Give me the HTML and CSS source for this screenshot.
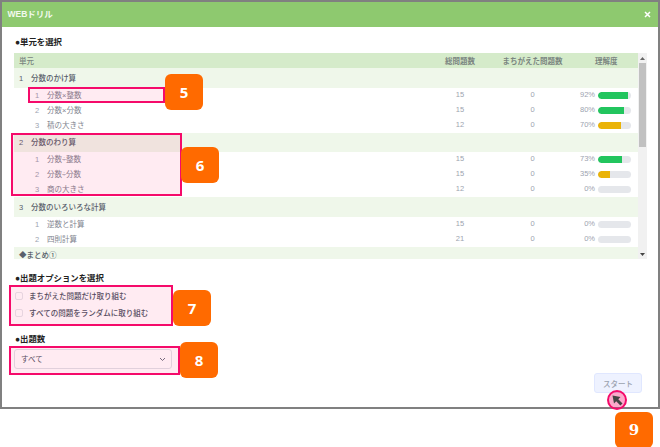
FILE: index.html
```html
<!DOCTYPE html>
<html lang="ja">
<head>
<meta charset="utf-8">
<title>WEBドリル</title>
<link rel="stylesheet" href="styles.css">
</head>
<body>
<div class="stage">
  <section class="modal">
    <header class="modal-head">
      <span class="modal-title">WEBドリル</span>
      <svg class="close" width="7" height="7" viewBox="0 0 7 7"><path d="M1 1l5 5M6 1L1 6" stroke="#fff" stroke-width="1.5" fill="none"/></svg>
    </header>
    <div class="modal-body">
      <h2 class="label first">●単元を選択</h2>
      <div class="table-wrap">
        <div class="table">
          <div class="row head"><span class="name">単元</span><span class="num">総問題数</span><span class="num">まちがえた問題数</span><span class="num">理解度</span></div>

          <div class="row group"><span class="name"><i class="gno">1</i>分数のかけ算</span></div>
          <div class="row item"><span class="name"><i class="ino">1</i>分数×整数</span><span class="num">15</span><span class="num">0</span><span class="rate"><b>92%</b><span class="bar"><span class="fill green" style="width:92%"></span></span></span></div>
          <div class="row item"><span class="name"><i class="ino">2</i>分数×分数</span><span class="num">15</span><span class="num">0</span><span class="rate"><b>80%</b><span class="bar"><span class="fill green" style="width:80%"></span></span></span></div>
          <div class="row item"><span class="name"><i class="ino">3</i>積の大きさ</span><span class="num">12</span><span class="num">0</span><span class="rate"><b>70%</b><span class="bar"><span class="fill amber" style="width:70%"></span></span></span></div>

          <div class="row group"><span class="name"><i class="gno">2</i>分数のわり算</span></div>
          <div class="row item"><span class="name"><i class="ino">1</i>分数÷整数</span><span class="num">15</span><span class="num">0</span><span class="rate"><b>73%</b><span class="bar"><span class="fill green" style="width:73%"></span></span></span></div>
          <div class="row item"><span class="name"><i class="ino">2</i>分数÷分数</span><span class="num">15</span><span class="num">0</span><span class="rate"><b>35%</b><span class="bar"><span class="fill amber" style="width:35%"></span></span></span></div>
          <div class="row item"><span class="name"><i class="ino">3</i>商の大きさ</span><span class="num">12</span><span class="num">0</span><span class="rate"><b>0%</b><span class="bar"></span></span></div>

          <div class="row group"><span class="name"><i class="gno">3</i>分数のいろいろな計算</span></div>
          <div class="row item"><span class="name"><i class="ino">1</i>逆数と計算</span><span class="num">15</span><span class="num">0</span><span class="rate"><b>0%</b><span class="bar"></span></span></div>
          <div class="row item"><span class="name"><i class="ino">2</i>四則計算</span><span class="num">21</span><span class="num">0</span><span class="rate"><b>0%</b><span class="bar"></span></span></div>

          <div class="row group last"><span class="name">◆まとめ①</span></div>
        </div>
        <div class="scrollbar">
          <svg width="5" height="3" viewBox="0 0 5 3"><path d="M2.5 0L5 3H0z" fill="#666"/></svg>
          <span class="thumb"></span>
          <svg width="5" height="3" viewBox="0 0 5 3"><path d="M0 0h5L2.500 3z" fill="#444"/></svg>
        </div>
      </div>

      <h2 class="label options">●出題オプションを選択</h2>
      <label class="check"><span class="box"></span>まちがえた問題だけ取り組む</label>
      <label class="check"><span class="box"></span>すべての問題をランダムに取り組む</label>

      <h2 class="label count">●出題数</h2>
      <div class="select"><span class="select-value">すべて</span>
        <svg width="7" height="5" viewBox="0 0 7 5"><path d="M1 1l2.500 2.500L6 1" stroke="#6b7280" stroke-width="1" fill="none"/></svg>
      </div>

      <div class="foot"><button class="start">スタート</button></div>
    </div>
  </section>

  <div class="mark m5"></div>
  <div class="mark m6"></div>
  <div class="mark m7"></div>
  <div class="mark m8"></div>
  <div class="tag t5">5</div>
  <div class="tag t6">6</div>
  <div class="tag t7">7</div>
  <div class="tag t8">8</div>
  <div class="tag t9">9</div>
  <div class="pointer">
    <svg width="14" height="14" viewBox="0 0 14 14"><path d="M2.500 2.500L10.500 4 8.300 6.200 12.500 10.400 10.400 12.500 6.200 8.300 4 10.500z" fill="#444"/></svg>
  </div>
</div>
</body>
</html>
```
FILE: styles.css
```css
* { box-sizing: border-box; }
html, body { margin: 0; padding: 0; background: #fff; }
body {
  width: 660px;
  height: 447px;
  overflow: hidden;
  font-family: "Liberation Sans", "Noto Sans CJK JP", sans-serif;
  color: #6b7280;
}
.stage { position: relative; width: 660px; height: 447px; }
.modal {
  height: 408.500px;
  border: 2px solid #808080;
  background: #fff;
  display: flex;
  flex-direction: column;
}
.modal-head {
  height: 25px;
  flex: none;
  background: #8ec96f;
  display: flex;
  align-items: center;
  justify-content: space-between;
  padding: 0 7.500px 0 5.500px;
  color: #fff;
}
.modal-title { font-size: 8.500px; font-weight: 700; color: #f2f9ee; margin-bottom: 3px; }
.close { margin-bottom: 1px; }
.modal-body { flex: 1; padding: 0 10px 0 12px; display: flex; flex-direction: column; }
.label {
  margin: 0;
  font-size: 8.400px;
  line-height: 12px;
  font-weight: 700;
  color: #222;
}
.label.first { margin: 9px 0 5px 1px; }
.label.options { margin: 13px 0 3.500px 1px; }
.label.count { margin: 11px 0 4.800px 1px; }

.table-wrap { display: flex; height: 206px; overflow: hidden; }
.table { width: 623.500px; flex: none; overflow: hidden; }
.row {
  display: grid;
  grid-template-columns: 416px 60px 85px 62.500px;
  align-items: center;
  font-size: 7.500px;
}
.row.head { height: 15px; padding-bottom: 1px; background: #d5ebca; font-weight: 700; color: #7a8580; }
.row.head .name { padding-left: 5px; font-weight: 500; }
.row.group { height: 19.500px; padding-bottom: 1px; background: #eff7ea; color: #59606b; font-weight: 500; }
.row.group .name { padding-left: 5px; }
.row.item { height: 15px; color: #7f858f; }
.row.item .name, .row.item .num { margin-bottom: 2px; }
.rate b { margin-bottom: 2px; }
.row.group.last {
  height: 12.500px;
  align-items: start;
  padding: 4px 0 0;
  line-height: 8px;
}
.row.last .name { font-family: "Noto Sans CJK JP", sans-serif; }
.gno, .ino { font-style: normal; display: inline-block; }
.gno { width: 12px; font-weight: 500; }
.ino { width: 12px; margin-left: 21px; color: #9ca3af; }
.num { text-align: center; }
.row.item .num { color: #9ca3af; }
.rate { display: flex; align-items: center; justify-content: flex-end; gap: 3px; padding-right: 6.500px; }
.rate b { font-weight: 400; color: #9ca3af; }
.bar { display: block; width: 33px; height: 7px; border-radius: 4px; background: #e5e7eb; overflow: hidden; }
.fill { display: block; height: 100%; border-radius: 4px 0 0 4px; }
.green { background: #22c55e; }
.amber { background: #eab308; }

.scrollbar {
  width: 9px;
  background: #f1f1f1;
  display: flex;
  flex-direction: column;
  align-items: center;
  justify-content: space-between;
  padding: 3.500px 0;
}
.thumb { display: block; width: 7px; height: 84.500px; margin: 3px 0 auto; background: #c1c1c1; }
.scrollbar svg:last-child { flex: none; }

.check {
  display: flex;
  align-items: center;
  gap: 6px;
  height: 17px;
  padding: 0 0 2px 1px;
  font-size: 7.500px;
  font-weight: 500;
  color: #4b5563;
}
.box { display: block; width: 8px; height: 8px; margin-top: 2px; border: 1px solid #e5e7eb; border-radius: 2px; background: #fff; }

.select {
  width: 158px;
  height: 20px;
  border: 1px solid #dfe2e8;
  border-radius: 3px;
  background: #fff;
  display: flex;
  align-items: center;
  justify-content: space-between;
  padding: 0 5.500px 0 6px;
  font-size: 7.500px;
  color: #4b5563;
}
.select-value { margin-bottom: 2px; }
.foot { display: flex; justify-content: flex-end; margin-top: 4px; padding-right: 6px; }
.start {
  width: 48px;
  height: 20px;
  border: 1px solid #e0e7ff;
  border-radius: 3px;
  background: #eef2ff;
  font: 500 7.500px "Liberation Sans", "Noto Sans CJK JP", sans-serif;
  color: #9ca3af;
  padding: 0;
}

.mark { position: absolute; border: 2px solid #f50a6a; background: rgba(255, 0, 90, .08); pointer-events: none; }
.m5 { left: 28px; top: 87px; width: 137px; height: 16px; }
.m6 { left: 11px; top: 133px; width: 171px; height: 63px; }
.m7 { left: 9px; top: 285px; width: 164px; height: 41px; }
.m8 { left: 9px; top: 346px; width: 171px; height: 29px; }
.tag {
  position: absolute;
  width: 38px;
  height: 36px;
  border-radius: 6px;
  background: #ff6a00;
  color: #fff;
  font: 700 15px/36px "Open Sans", sans-serif;
  text-align: center;
}
.t5 { left: 165px; top: 74px; }
.t6 { left: 181px; top: 147px; }
.t7 { left: 173px; top: 290px; }
.t8 { left: 180px; top: 342px; }
.t9 { left: 615px; top: 412px; font-family: "DejaVu Serif", serif; }
.pointer {
  position: absolute;
  left: 607px;
  top: 390px;
  width: 20px;
  height: 20px;
  border: 2px solid #f50a6a;
  border-radius: 50%;
  background: rgba(245, 10, 106, .35);
  display: flex;
  align-items: center;
  justify-content: center;
}
```
